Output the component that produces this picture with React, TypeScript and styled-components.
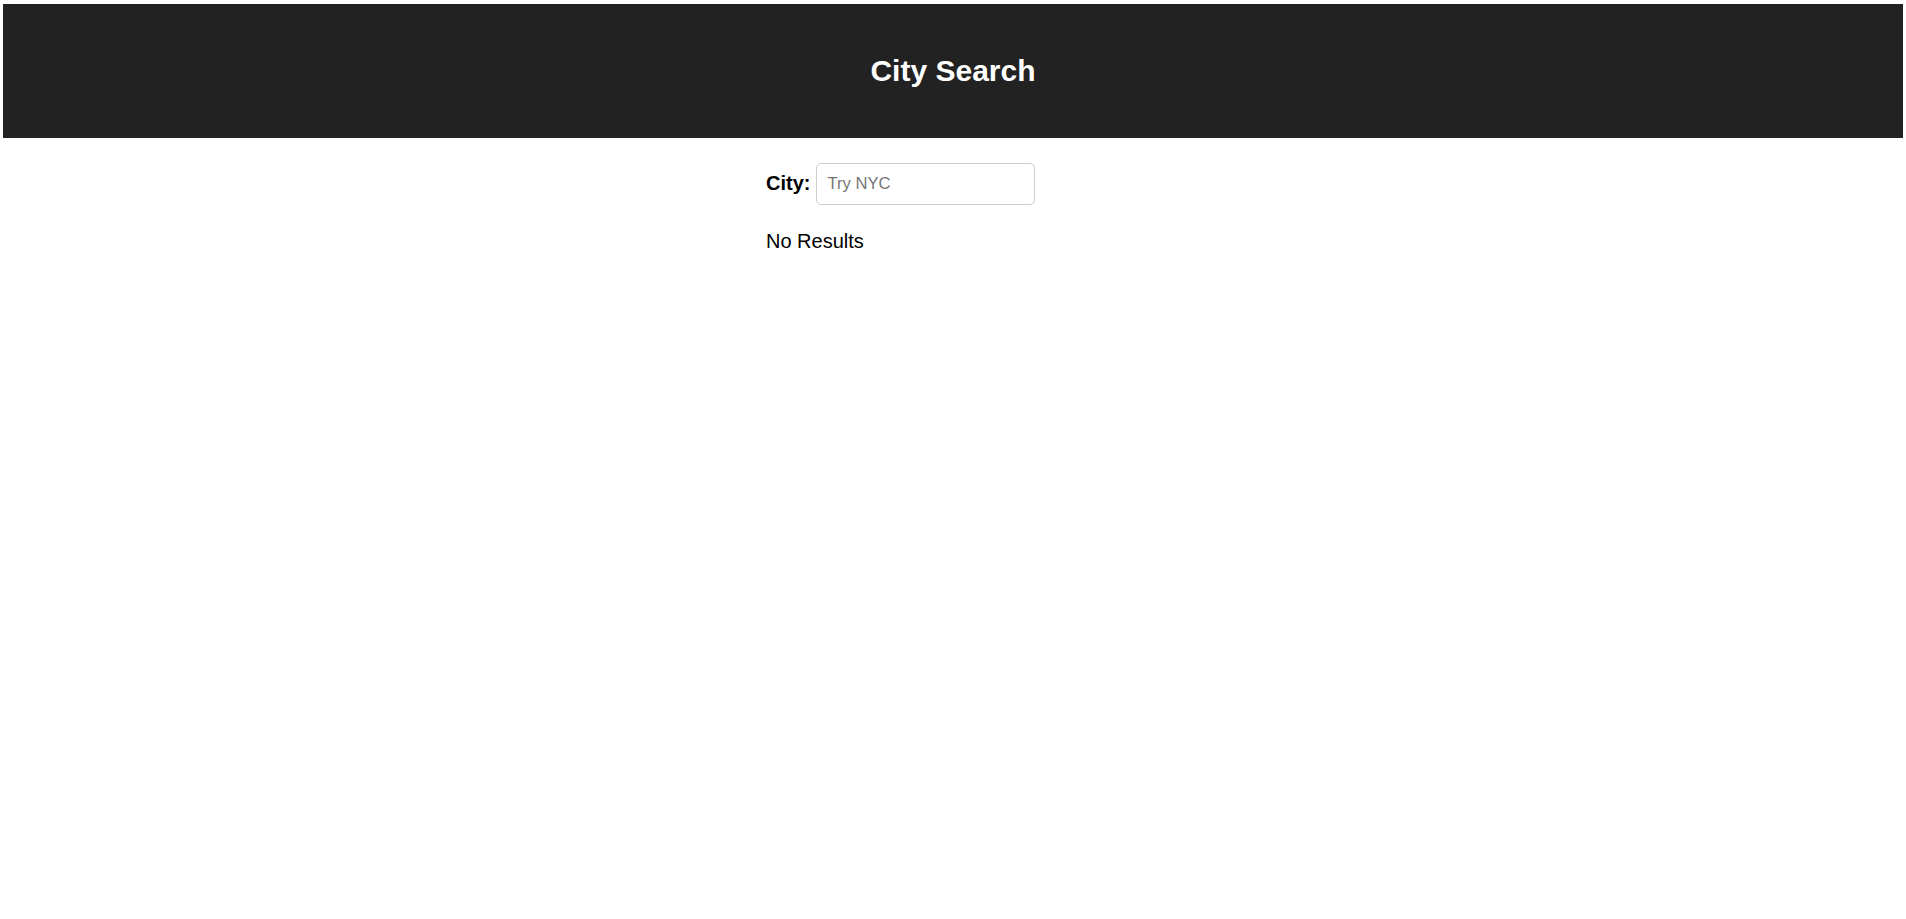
import React, { useState } from "react";
import styled, { createGlobalStyle } from "styled-components";

const GlobalStyle = createGlobalStyle`
  html, body {
    margin: 0;
    padding: 0;
    background: #ffffff;
  }
  body {
    font-family: "Liberation Sans", Arial, sans-serif;
    font-size: 20px;
    color: #000000;
  }
  * { box-sizing: border-box; }
`;

const Page = styled.div`
  padding: 4px 3px;
`;

const Header = styled.header`
  height: 134px;
  background: #222222;
  display: flex;
  align-items: center;
  justify-content: center;
`;

const Title = styled.h1`
  margin: 0;
  color: #ffffff;
  font-size: 30px;
  font-weight: 700;
  font-family: "Liberation Sans", Arial, sans-serif;
`;

const Content = styled.main`
  width: 374px;
  margin: 0 auto;
  padding-top: 25px;
  display: flex;
  flex-direction: column;
  gap: 25px;
`;

const Field = styled.div`
  display: flex;
  align-items: center;
  gap: 6px;
`;

const Label = styled.label`
  font-weight: 700;
  font-size: 20px;
  line-height: 23px;
  padding-bottom: 2px;
`;

const Input = styled.input`
  width: 219px;
  height: 42px;
  border: 1px solid #cccccc;
  border-radius: 5px;
  padding: 0 10px;
  font-family: "Liberation Sans", Arial, sans-serif;
  font-size: 16.6px;
  color: #000;
  outline: none;
  &::placeholder {
    color: #757575;
  }
`;

const Message = styled.p`
  margin: 0;
  font-size: 20px;
  line-height: 23px;
`;

export default function App() {
  const [city, setCity] = useState("");
  return (
    <>
      <GlobalStyle />
      <Page>
        <Header>
          <Title>City Search</Title>
        </Header>
        <Content>
          <Field>
            <Label htmlFor="city">City:</Label>
            <Input
              id="city"
              placeholder="Try NYC"
              value={city}
              onChange={(e) => setCity(e.target.value)}
            />
          </Field>
          <Message>No Results</Message>
        </Content>
      </Page>
    </>
  );
}
